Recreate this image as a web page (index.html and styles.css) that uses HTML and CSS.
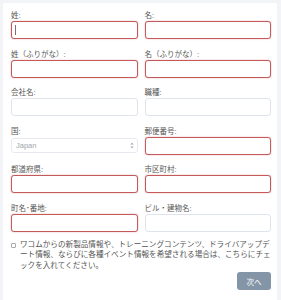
FILE: index.html
```html
<!DOCTYPE html>
<html lang="ja">
<head>
    <meta charset="UTF-8">
    <meta name="viewport" content="width=device-width, initial-scale=1.0">
    <title>登録フォーム</title>
    <link rel="stylesheet" href="styles.css">
</head>
<body>
    <div class="card">
        <form class="reg-form">
            <div class="grid">
                <div class="form-group">
                    <label for="sei">姓:</label>
                    <div class="field">
                        <input type="text" id="sei" class="invalid">
                        <span class="caret"></span>
                    </div>
                </div>
                <div class="form-group">
                    <label for="mei">名:</label>
                    <input type="text" id="mei" class="invalid">
                </div>
                <div class="form-group">
                    <label for="sei-kana">姓（ふりがな）:</label>
                    <input type="text" id="sei-kana" class="invalid">
                </div>
                <div class="form-group">
                    <label for="mei-kana">名（ふりがな）:</label>
                    <input type="text" id="mei-kana" class="invalid">
                </div>
                <div class="form-group">
                    <label for="company">会社名:</label>
                    <input type="text" id="company">
                </div>
                <div class="form-group">
                    <label for="job">職種:</label>
                    <input type="text" id="job">
                </div>
                <div class="form-group">
                    <label for="country">国:</label>
                    <div class="select-wrap">
                        <select id="country">
                            <option>Japan</option>
                        </select>
                        <svg class="select-arrows" width="4" height="7" viewBox="0 0 4 7">
                            <path d="M0.3 2.6 L2 0.8 L3.7 2.6 Z M0.3 4.4 L2 6.2 L3.7 4.4 Z" fill="#9aa3ad"/>
                        </svg>
                    </div>
                </div>
                <div class="form-group">
                    <label for="zip">郵便番号:</label>
                    <input type="text" id="zip" class="invalid">
                </div>
                <div class="form-group">
                    <label for="pref">都道府県:</label>
                    <input type="text" id="pref" class="invalid">
                </div>
                <div class="form-group">
                    <label for="city">市区町村:</label>
                    <input type="text" id="city" class="invalid">
                </div>
                <div class="form-group">
                    <label for="street">町名･番地:</label>
                    <input type="text" id="street" class="invalid">
                </div>
                <div class="form-group">
                    <label for="building">ビル・建物名:</label>
                    <input type="text" id="building">
                </div>
            </div>

            <label class="optin">
                <input type="checkbox">
                <span>ワコムからの新製品情報や、トレーニングコンテンツ、ドライバアップデート情報、ならびに各種イベント情報を希望される場合は、こちらにチェックを入れてください。</span>
            </label>

            <div class="actions">
                <button type="submit">次へ</button>
            </div>
        </form>
    </div>
</body>
</html>
```

FILE: styles.css
```css
* {
    margin: 0;
    padding: 0;
    box-sizing: border-box;
}

body {
    font-family: "Liberation Sans", "Noto Sans CJK JP", sans-serif;
    background-color: #f3f4f7;
    color: #555;
    height: 300px;
    overflow: hidden;
}

.card {
    margin: 3px 4px 0 3px;
    padding: 7px 6px 0 8px;
    background-color: #fff;
    height: 297px;
}

/* Field grid */
.grid {
    display: grid;
    grid-template-columns: 1fr 1fr;
    column-gap: 7px;
    row-gap: 9.6px;
}

.form-group label {
    display: block;
    font-size: 7.5px;
    line-height: 11px;
    color: #555;
}

.field {
    position: relative;
}

.form-group input {
    display: block;
    width: 100%;
    height: 18px;
    border: 1px solid #dfe4ec;
    border-radius: 3px;
    background-color: #fff;
    outline: none;
}

.form-group input.invalid {
    border-color: #c4595a;
    box-shadow: 0 0 1.5px rgba(196, 89, 90, 0.6);
}

.caret {
    position: absolute;
    left: 4px;
    top: 4px;
    width: 1px;
    height: 10px;
    background-color: #8a6a6a;
}

/* Country select */
.select-wrap {
    position: relative;
    margin-top: 1px;
}

.select-wrap select {
    display: block;
    width: 100%;
    height: 15px;
    padding-left: 4px;
    border: 1px solid #e6eaf0;
    border-radius: 3px;
    background-color: #fff;
    color: #a0a6ae;
    font-family: "Liberation Sans", sans-serif;
    font-size: 7.5px;
    appearance: none;
    -webkit-appearance: none;
    outline: none;
}

.select-arrows {
    position: absolute;
    right: 4px;
    top: 4px;
}

/* Opt-in checkbox */
.optin {
    display: flex;
    align-items: flex-start;
    margin-top: 8px;
    font-size: 7.6px;
    line-height: 10.5px;
    color: #555;
}

.optin input {
    flex: none;
    width: 5px;
    height: 5px;
    margin: 3px 4px 0 0;
    appearance: none;
    -webkit-appearance: none;
    border: 1px solid #aaa;
    border-radius: 1px;
    background-color: #fff;
}

.optin span {
    flex: 1;
}

/* Submit button */
.actions {
    display: flex;
    justify-content: flex-end;
    margin-top: 1px;
}

.actions button {
    width: 34px;
    height: 18px;
    border: none;
    border-radius: 3px;
    background-color: #8595a8;
    color: #fff;
    font-family: "Noto Sans CJK JP", sans-serif;
    font-size: 7.5px;
}
```
